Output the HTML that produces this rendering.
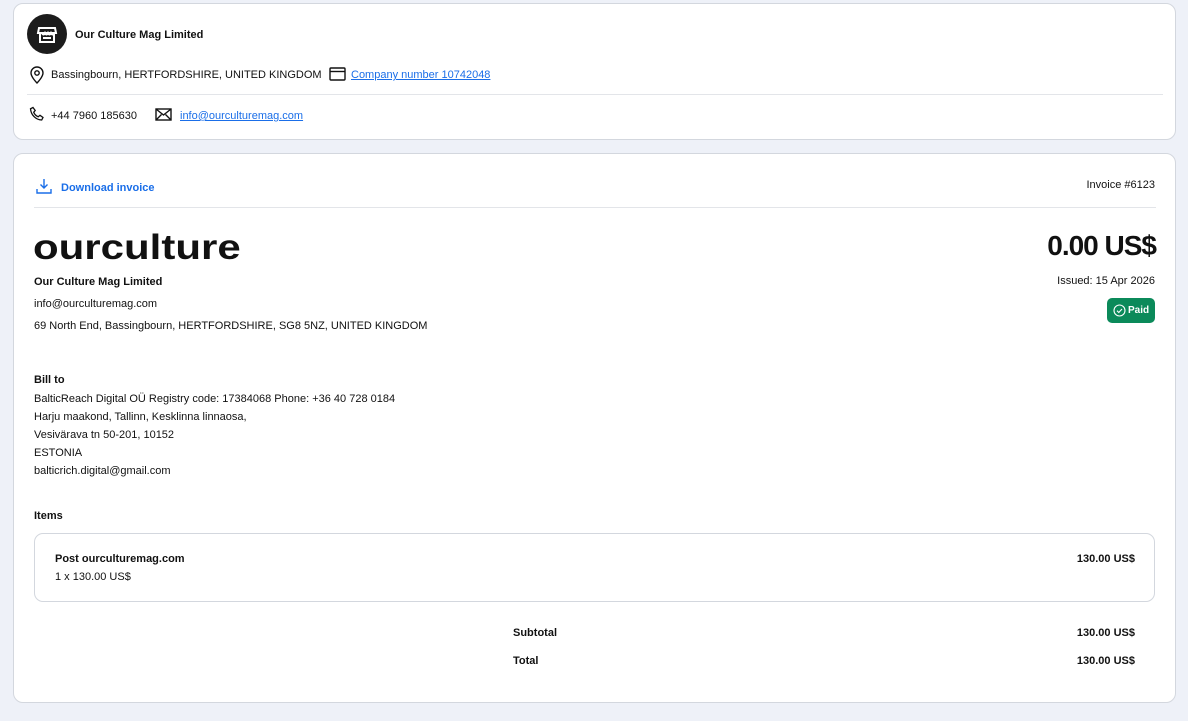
<!DOCTYPE html>
<html><head><meta charset="utf-8"><style>
*{box-sizing:border-box;margin:0;padding:0}
body{width:1188px;height:721px;background:#eef1f8;font-family:"Liberation Sans",Arial,sans-serif;color:#111;font-size:11px;position:relative;overflow:hidden}
.card{position:absolute;left:13px;width:1163px;background:#fff;border:1px solid #d3d7de;border-radius:10px}
.abs{position:absolute;white-space:nowrap}
.t{margin-top:2px}
a{color:#1a6ee8;text-decoration:underline}
</style></head><body>
<div class="card" style="top:3px;height:137px">
  <div class="abs" style="left:13px;top:10px;width:40px;height:40px;border-radius:50%;background:#1c1c1c">
    <svg width="40" height="40" viewBox="0 0 40 40" fill="none" stroke="#fff" stroke-width="2"><path d="M12 14h16l1 5H11z"/><path d="M13 19v9h14v-9"/><path d="M15 19q1.5 3 3 0q1.5 3 3 0q1.5 3 3 0q1.5 3 3 0"/><path d="M16 24h8"/></svg>
  </div>
  <div class="abs t" style="left:61px;top:23px;font-weight:700">Our Culture Mag Limited</div>
  <svg class="abs" style="left:15px;top:62px" width="16" height="18" viewBox="0 0 16 18" fill="none" stroke="#111" stroke-width="1.4"><path d="M8 17s-6-6-6-10a6 6 0 0 1 12 0c0 4-6 10-6 10z"/><circle cx="8" cy="7" r="2.2"/></svg>
  <div class="abs t" style="left:37px;top:63px">Bassingbourn, HERTFORDSHIRE, UNITED KINGDOM</div>
  <svg class="abs" style="left:315px;top:63px" width="17" height="14" viewBox="0 0 17 14" fill="none" stroke="#111" stroke-width="1.4"><rect x="1" y="1" width="15" height="12" rx="1"/><path d="M1 4.5h15"/></svg>
  <div class="abs t" style="left:337px;top:63px"><a>Company number 10742048</a></div>
  <div class="abs" style="left:13px;top:90px;width:1136px;height:1px;background:#e3e5e9"></div>
  <svg class="abs" style="left:15px;top:102px" width="16" height="16" viewBox="0 0 16 16" fill="none" stroke="#111" stroke-width="1.3"><path d="M4 1.5l2.2 3-1.5 1.8c.8 2 2.5 3.7 4.5 4.5l1.8-1.5 3 2.2-1.3 2.5C7 14 2 9 1.5 2.8z"/></svg>
  <div class="abs t" style="left:37px;top:104px">+44 7960 185630</div>
  <svg class="abs" style="left:141px;top:104px" width="17" height="13" viewBox="0 0 17 13" fill="none" stroke="#111" stroke-width="1.4"><rect x="1" y="1" width="15" height="11"/><path d="M1 1l7.5 6 7.5-6M1 12l5.5-5.5M16 12l-5.5-5.5"/></svg>
  <div class="abs t" style="left:166px;top:104px"><a>info@ourculturemag.com</a></div>
</div>
<div class="card" style="top:153px;height:550px">
  <svg class="abs" style="left:22px;top:24px" width="16" height="16" viewBox="0 0 16 16" fill="none" stroke="#1a6ee8" stroke-width="1.4"><path d="M8 1v9M4.5 6.5L8 10l3.5-3.5M1 11v4h14v-4"/></svg>
  <div class="abs t" style="left:47px;top:26px;color:#1a6ee8;font-weight:700">Download invoice</div>
  <div class="abs t" style="right:20px;top:23px">Invoice #6123</div>
  <div class="abs" style="left:20px;top:53px;width:1122px;height:1px;background:#e3e5e9"></div>
  <div class="abs" style="left:19px;top:74px;font-size:35px;font-weight:700;line-height:40px;color:#111;transform:scaleX(1.2);transform-origin:0 0">ourculture</div>
  <div class="abs t" style="left:20px;top:120px;font-weight:700">Our Culture Mag Limited</div>
  <div class="abs t" style="left:20px;top:142px">info@ourculturemag.com</div>
  <div class="abs t" style="left:20px;top:164px">69 North End, Bassingbourn, HERTFORDSHIRE, SG8 5NZ, UNITED KINGDOM</div>
  <div class="abs" style="right:19px;top:76px;font-size:28px;font-weight:700;letter-spacing:-1px">0.00 US$</div>
  <div class="abs t" style="right:20px;top:119px">Issued: 15 Apr 2026</div>
  <div class="abs" style="right:20px;top:144px;width:48px;height:25px;border-radius:5px;background:#0b8a5a;color:#fff;font-weight:700;font-size:10px;line-height:25px;padding-left:21px">
    <svg style="position:absolute;left:6px;top:6px" width="13" height="13" viewBox="0 0 13 13" fill="none" stroke="#fff" stroke-width="1.1"><circle cx="6.5" cy="6.5" r="5.5"/><path d="M4 6.7l1.8 1.8L9 5"/></svg>Paid</div>
  <div class="abs" style="left:20px;top:220px;font-weight:700">Bill to</div>
  <div class="abs" style="left:20px;top:236px;line-height:18px">BalticReach Digital OÜ Registry code: 17384068 Phone: +36 40 728 0184<br>Harju maakond, Tallinn, Kesklinna linnaosa,<br>Vesivärava tn 50-201, 10152<br>ESTONIA<br>balticrich.digital@gmail.com</div>
  <div class="abs t" style="left:20px;top:354px;font-weight:700">Items</div>
  <div class="abs" style="left:20px;top:379px;width:1121px;height:69px;border:1px solid #d3d7de;border-radius:9px"></div>
  <div class="abs t" style="left:41px;top:397px;font-weight:700">Post ourculturemag.com</div>
  <div class="abs t" style="left:41px;top:415px">1 x 130.00 US$</div>
  <div class="abs t" style="right:40px;top:397px;font-weight:700">130.00 US$</div>
  <div class="abs t" style="left:499px;top:471px;font-weight:700">Subtotal</div>
  <div class="abs t" style="right:40px;top:471px;font-weight:700">130.00 US$</div>
  <div class="abs t" style="left:499px;top:499px;font-weight:700">Total</div>
  <div class="abs t" style="right:40px;top:499px;font-weight:700">130.00 US$</div>
</div>
</body></html>
